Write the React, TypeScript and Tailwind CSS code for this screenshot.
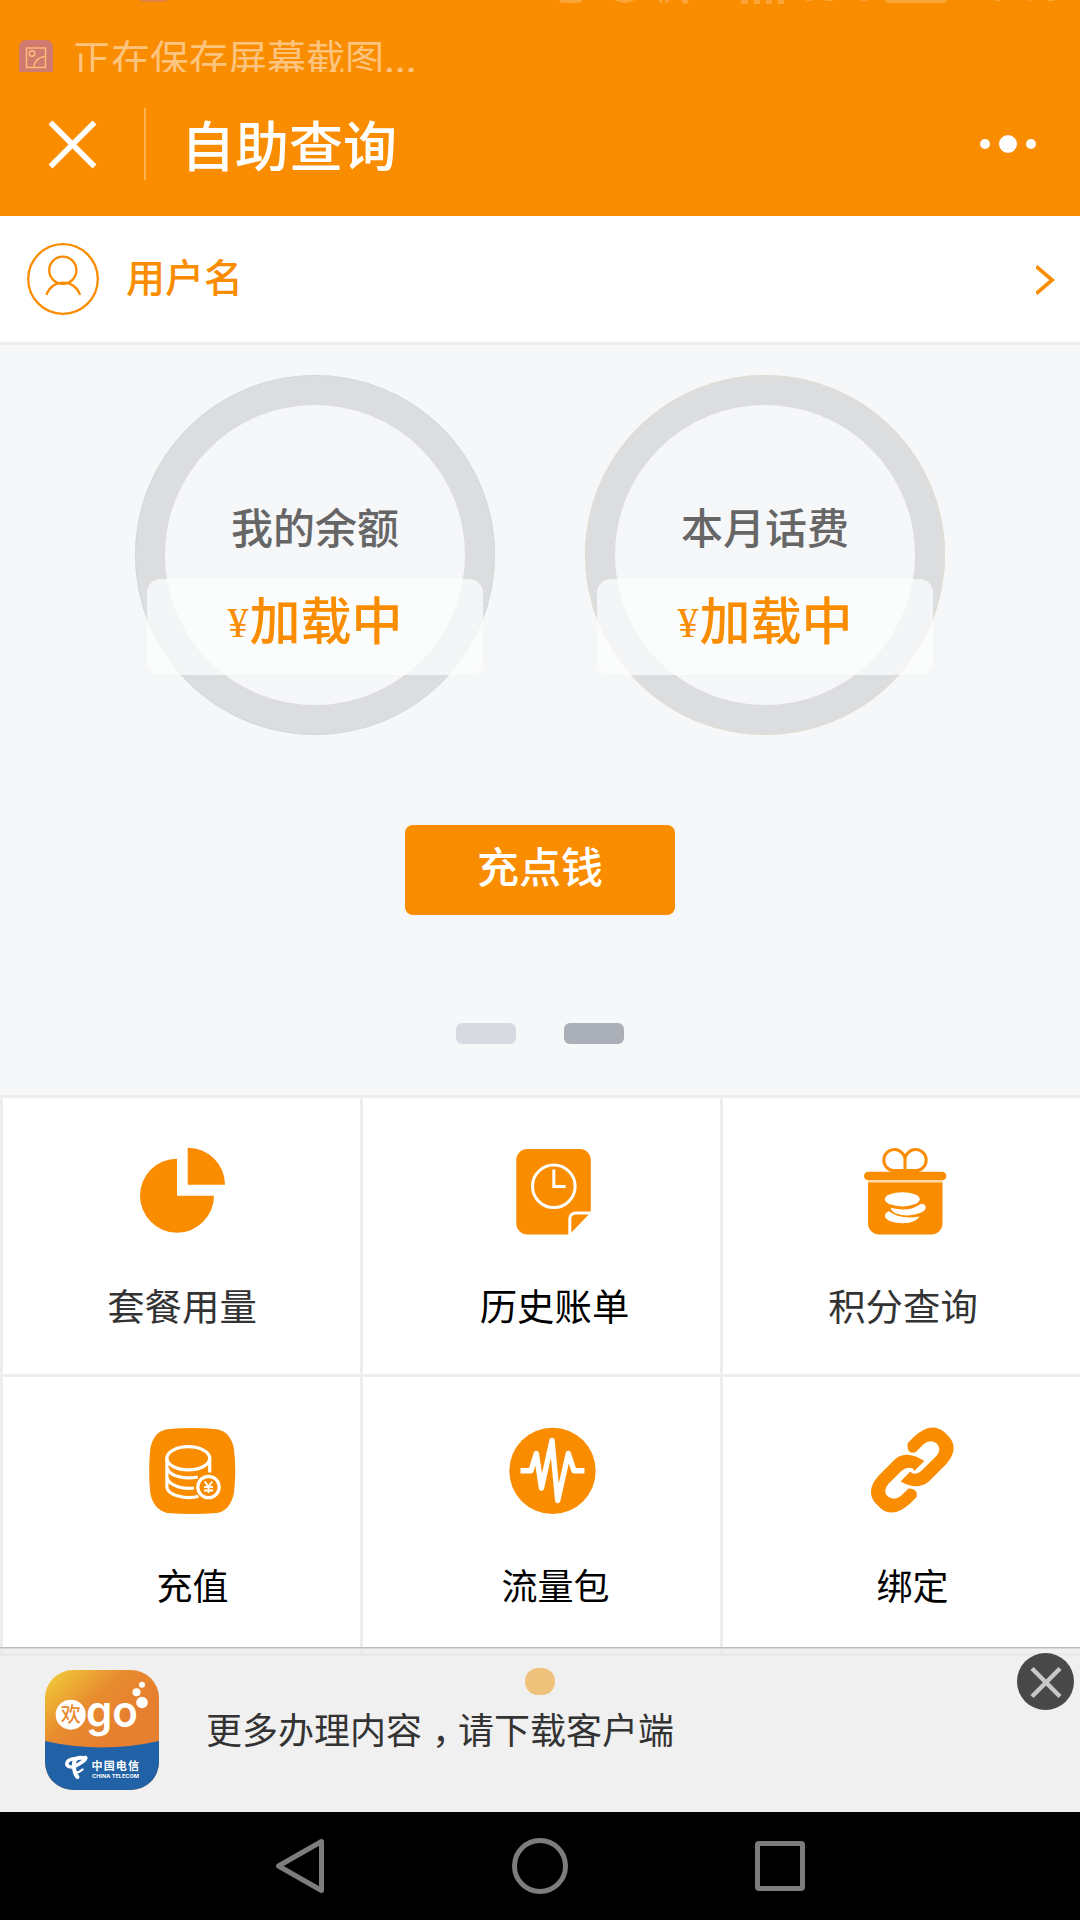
import type { ReactNode } from "react";

const PieIcon = () => (
  <svg className="w-[90px] h-[90px] overflow-visible" viewBox="0 0 90 90" fill="#fa8c00">
    <path d="M40 12.7A37 37 0 1 0 77 49.7H40Z" />
    <path d="M50.7 1.8V38.8H88A37 37 0 0 0 50.7 1.8Z" />
  </svg>
);

const BillIcon = () => (
  <svg className="w-[90px] h-[90px] overflow-visible" viewBox="0.7 0 90 90" fill="#fa8c00">
    <path d="M18 3H70.5a11 11 0 0 1 11 11V65.5H67q-8 0 -8 8V88.5H18a11 11 0 0 1 -11 -11V14a11 11 0 0 1 11 -11Z" />
    <path d="M79.5 68.5H67q-5 0 -5 5V86.5Z" />
    <circle cx="44.5" cy="40.3" r="21.3" fill="none" stroke="#fff" strokeWidth="3" />
    <path d="M44.5 23.5V40.5H56.3" fill="none" stroke="#fff" strokeWidth="3" />
  </svg>
);

const GiftIcon = () => (
  <svg className="w-[90px] h-[90px] overflow-visible" viewBox="0 0 90 90" fill="#fa8c00">
    <path
      d="M47 25V14a10.6 10.6 0 1 0 -12 10.6H59a10.6 10.6 0 1 0 -12 -10.6"
      fill="none"
      stroke="#fa8c00"
      strokeWidth="3"
    />
    <rect x="6" y="25.7" width="82.4" height="8.6" rx="4.3" />
    <path d="M10 36.3H84.5V77a11 11 0 0 1 -11 11.5H21a11 11 0 0 1 -11 -11.5Z" />
    <path d="M10 35.3H84.5" stroke="#fdd9a8" strokeWidth="2" />
    <ellipse cx="44.3" cy="53.3" rx="17.4" ry="7.1" fill="#fff" />
    <path d="M32.7 61.8Q50 66.5 61 59Q65.5 56 67.7 60.5Q68 65 62 67Q50 71.5 38 67.5Q33 65 32.7 61.8Z" fill="#fff" />
    <path d="M31 65.3Q26 67 27.2 71.5Q31 77 45 77.3Q58 77 61.5 70.5Q43 74 31 65.3Z" fill="#fff" />
  </svg>
);

const CoinsIcon = () => (
  <svg className="w-[90px] h-[90px] overflow-visible" viewBox="0 0 90 90">
    <path
      d="M19 4.2Q44 2 69 4.2Q83 7 86 24Q88.5 46 86 68Q82 86 69 88Q44 90 19 88Q5 84 2.3 68Q0 46 2.3 24Q5 7 19 4.2Z"
      fill="#fa8c00"
    />
    <g fill="none" stroke="#fff" strokeWidth="3.2">
      <ellipse cx="40.3" cy="33.3" rx="21.4" ry="11.6" />
      <path d="M18.9 33V62C19 70 38 75 50.500 71.300" />
      <path d="M61.7 33V47.5" />
      <path d="M18.9 43C22 52 38 54.5 49.8 52" />
      <path d="M18.9 53C22 61.5 36 64.5 46 63" />
      <circle cx="60.5" cy="62" r="10.7" />
    </g>
    <path d="M56.7 56.5L60.5 61.5L64.3 56.5M60.5 61.5V68M56 62H65M56 65.5H65" fill="none" stroke="#fff" strokeWidth="1.8" />
  </svg>
);

const PulseIcon = () => (
  <svg className="w-[90px] h-[90px] overflow-visible" viewBox="0 0 90 90">
    <circle cx="41.5" cy="45.9" r="43.2" fill="#fa8c00" />
    <path
      d="M9.5 45.7H20L25.3 28.5L30.5 63L41 15.5L46.7 75.5L57.3 28.5L63 45.7H73.5"
      fill="none"
      stroke="#fff"
      strokeWidth="5.4"
      strokeLinejoin="round"
    />
  </svg>
);

const LinkIcon = () => (
  <svg className="w-[90px] h-[90px] overflow-visible" viewBox="0.7 0 90 90">
    <g fill="#fa8c00">
      <path d="M40.5 18L47 11.5Q64 -4 77 7L82 12Q92 24 79 39L61.5 56.5Q50 66 33.3 56.5L43 46.5L44.5 48Q50 50.5 56 44L69 31Q75 24 69.5 18.5Q63 14 56.5 19L48.5 27Q44 29 41 25.5Q39.5 21 40.5 18Z" />
      <path d="M49.3 72L42.8 78.500Q26 94 13 83L8 78Q-2 66 11 51L28.5 33.5Q40 25 57 36L47 46L45.5 43.5Q40 41 34 46L21 59Q15 66 20.5 71.5Q27 76 33.5 71L41.3 63.5Q46 63 48.5 66Q50.3 69 49.3 72Z" />
    </g>
  </svg>
);

interface CellProps {
  label: string;
  icon: ReactNode;
  className?: string;
  textClass?: string;
}

const Cell = ({ label, icon, className = "", textClass = "" }: CellProps) => (
  <div className={`flex flex-col items-center bg-white pt-12 ${className}`}>
    {icon}
    <span className={`mt-11 leading-[50px] whitespace-nowrap ${textClass}`}>{label}</span>
  </div>
);

const Ring = ({ label, edge }: { label: string; edge: string }) => (
  <div className={`relative size-[360px] rounded-full border-[30px] border-[#dcdddf] outline-1 -outline-offset-1 ${edge}`}>
    <div className="pt-24 text-center text-[42px] font-medium leading-[50px] text-[#666]">{label}</div>
    <div className="absolute -left-[18px] top-[174px] flex h-24 w-[336px] items-start justify-center rounded-[14px] bg-[#feffff]/70 pt-[9px] text-[51px] leading-[60px] text-[#fa8c00]">
      <span className="mr-px font-['Liberation_Serif',serif] text-[42px] leading-[70px]">¥</span>
      <span className="font-medium">加载中</span>
    </div>
  </div>
);

const AppLogo = () => (
  <svg className="w-[114px] h-[120px]" viewBox="0 0 114 120">
    <defs>
      <linearGradient id="sun" x1="0" y1="0" x2="0.6" y2="0.7">
        <stop offset="0" stopColor="#f2d43c" />
        <stop offset="0.18" stopColor="#eeb836" />
        <stop offset="0.5" stopColor="#e88c2f" />
        <stop offset="0.85" stopColor="#e67f2f" />
      </linearGradient>
      <clipPath id="tile">
        <rect width="114" height="120" rx="28" />
      </clipPath>
    </defs>
    <g clipPath="url(#tile)">
      <rect width="114" height="120" fill="url(#sun)" />
      <path d="M0 71Q57 84 114 71V120H0Z" fill="#2161a5" />
    </g>
    <circle cx="25.7" cy="44.7" r="15" fill="#fff" />
    <text x="15.7" y="52" fontSize="20" fontWeight="500" fill="#e88a30" fontFamily="'Noto Sans CJK SC', sans-serif">
      欢
    </text>
    <text x="41" y="56.5" fontSize="44" fontWeight="600" fill="#fff" textLength="52" lengthAdjust="spacingAndGlyphs" fontFamily="Inter, sans-serif">
      go
    </text>
    <circle cx="97" cy="14.7" r="3" fill="#fff" />
    <circle cx="91.5" cy="22.3" r="4" fill="#fff" />
    <circle cx="97" cy="32.5" r="5.8" fill="#fff" />
    {/* telecom mark */}
    <g fill="none" stroke="#fff" strokeLinecap="round">
      <path d="M31 88.5Q21 89 22 95Q25 99.500 34 94Q42 89 40.500 87.500" strokeWidth="3.6" />
      <path d="M38 88Q28 86 29 97Q29.500 104 32.500 107" strokeWidth="4" />
      <path d="M30 102.5Q34 103 37.500 99.500" strokeWidth="2.4" />
    </g>
    <text x="46.5" y="100" fontSize="11" fontWeight="700" fill="#fff" textLength="47.500" fontFamily="'Noto Sans CJK SC', sans-serif">
      中国电信
    </text>
    <text x="47" y="108" fontSize="5" fontWeight="700" fill="#fff" textLength="47" lengthAdjust="spacingAndGlyphs" fontFamily="Inter, sans-serif">
      CHINA TELECOM
    </text>
  </svg>
);

const App = () => {
  return (
    <div className="flex h-[1920px] w-[1080px] flex-col overflow-hidden bg-white font-['Noto_Sans_CJK_SC',sans-serif]">
      <header className="h-[216px] shrink-0 bg-[#fa8c00]">
        {/* status bar sliding away under the screenshot notice */}
        <div className="h-[72px] overflow-hidden">
          <svg className="block h-[5px] w-[1080px]" viewBox="0 0 1080 5" fill="#fff" fillOpacity="0.22">
            <path d="M139 0H168Q166 2 162 2H145Q141 2 139 0Z" fill="#d17a70" fillOpacity="0.6" />
            <path d="M559 0H582Q581 3 578 3H563Q560 3 559 0ZM614 0H635Q625 6 614 0ZM659 0H662V3H659ZM665 0H670L667 3H665ZM681 0H689Q688 4 685 4Q682 4 681 0Z" />
            <path d="M741 0H748V4H741ZM754 0H760V4H754ZM766 0H772V4H766ZM778 0H784V4H778ZM885 0H947Q946 3 943 3H889Q886 3 885 0Z" />
            <path d="M806 0H812V1H806ZM824 0H834Q829 2.5 824 0ZM860 0H868Q864 2.5 860 0ZM995 0H1000V1H995ZM1028 0H1031V1H1028ZM1048 0H1054V1H1048Z" />
          </svg>
          <div className="flex items-start pl-[19px] pt-[35px]">
            <svg className="size-[34px]" viewBox="0 0 34 34">
              <rect width="34" height="36" rx="7" fill="#d17a70" />
              <g fill="none" stroke="#fdc078" strokeWidth="1.4">
                <rect x="7.5" y="8" width="19" height="19.5" />
                <circle cx="13" cy="13.5" r="2.8" />
                <path d="M26 16.5Q17 17 14.5 27" />
              </g>
            </svg>
            <span className="-mt-[3px] ml-[19px] text-[39px] leading-[39px] text-[#fdc47f]">正在保存屏幕截图...</span>
          </div>
        </div>
        <div className="flex h-36 items-center pl-12 pr-11 text-white">
          <svg className="size-[50px]" viewBox="0 0 50 50" fill="none" stroke="currentColor" strokeWidth="5.5">
            <path d="M2.5 3.5L46.5 47.5M46.5 3.5L2.5 47.5" />
          </svg>
          <div className="ml-[46px] h-[72px] w-0.5 bg-[#fcb04f]" />
          <h1 className="ml-[35px] text-[54px] font-medium leading-[60px]">自助查询</h1>
          <div className="ml-auto flex items-center gap-[9px]">
            <i className="size-2.5 rounded-full bg-white" />
            <i className="size-[18px] rounded-full bg-white" />
            <i className="size-2.5 rounded-full bg-white" />
          </div>
        </div>
      </header>

      <div className="flex h-[129px] shrink-0 items-center border-b-[3px] border-[#eee] pl-[27px] pr-6 text-[#fa8c00]">
        <svg className="size-[72px]" viewBox="0 0 72 72" fill="none" stroke="currentColor" strokeWidth="2.3">
          <circle cx="36" cy="36" r="34.8" />
          <circle cx="35.8" cy="27.3" r="13.6" />
          <path d="M19.5 52A17.5 17.5 0 0 1 53 52" />
        </svg>
        <span className="-mt-2 ml-[27px] text-[39px] font-medium leading-[46px]">用户名</span>
        <svg className="ml-auto mt-0.5 h-8 w-5" viewBox="0.8 0 20 32" fill="none" stroke="currentColor" strokeWidth="3.6">
          <path d="M1 2.500L17 16L1 29.500" />
        </svg>
      </div>

      <section className="flex h-[750px] shrink-0 flex-col items-center bg-[#f6f7f9] pt-[30px]">
        <div className="flex gap-[90px]">
          <Ring label="我的余额" edge="outline-[#d0dcda]" />
          <Ring label="本月话费" edge="outline-[#e4ddcf]" />
        </div>
        <button className="mt-[90px] h-[90px] w-[270px] rounded-lg bg-[#fa8c00] pb-2.5 text-[42px] font-medium leading-[50px] text-white">
          充点钱
        </button>
        <div className="mt-[108px] flex gap-12">
          <i className="h-[21px] w-[60px] rounded-md bg-[#d7dae0]" />
          <i className="h-[21px] w-[60px] rounded-md bg-[#abafb8]" />
        </div>
      </section>

      <section className="grid h-[561px] shrink-0 grid-cols-3 grid-rows-2 gap-[3px] bg-[#eee] py-[3px] pl-[3px]">
        <Cell label="套餐用量" icon={<PieIcon />} className="pl-px" textClass="text-[37.4px] text-[#333]" />
        <Cell label="历史账单" icon={<BillIcon />} className="pl-[26px]" textClass="text-[37.4px] text-black" />
        <Cell label="积分查询" icon={<GiftIcon />} className="pl-[3px]" textClass="text-[37.4px] text-[#333]" />
        <Cell label="充值" icon={<CoinsIcon />} className="pl-[22px]" textClass="text-[36px] text-black" />
        <Cell label="流量包" icon={<PulseIcon />} className="pl-7" textClass="text-[36px] text-black" />
        <Cell label="绑定" icon={<LinkIcon />} className="pl-[22px]" textClass="text-[36px] text-black" />
      </section>

      {/* download bar overlaps the last grid line */}
      <div className="relative z-10 -mt-[9px] flex h-[165px] shrink-0 items-start border-t border-[#bdbdbd] bg-[#e6e6e6]/60 pl-[45px] shadow-[inset_0_1px_0_#d8d8d8]">
        <div className="mt-[22px]">
          <AppLogo />
        </div>
        <p className="ml-[47px] mt-[55px] whitespace-nowrap text-[36px] leading-[50px] text-[#333]">
          更多办理内容<span className="pl-2.5 pr-2 [font-feature-settings:'halt']">，</span>请下载客户端
        </p>
        <i className="absolute left-[525px] top-5 h-[27px] w-[30px] rounded-[13px] bg-[#eec27a]" />
        <button className="absolute right-1.5 top-[5px] size-[57px] rounded-full bg-[#484848]">
          <svg className="size-[57px]" viewBox="0 0 57 57" fill="none" stroke="#c8c8c8" strokeWidth="4.5">
            <path d="M15 15.5L43 43.5M43 15.5L15 43.5" />
          </svg>
        </button>
      </div>

      <nav className="flex h-[108px] shrink-0 items-center gap-[188px] bg-black pl-[274px]">
        <svg className="h-14 w-[50px]" viewBox="0 0 50 56" fill="none" stroke="#7d7d7d" strokeWidth="5" strokeLinejoin="round">
          <path d="M4.5 28L47.5 3.5V52.5Z" />
        </svg>
        <div className="size-14 rounded-full border-[5px] border-[#7d7d7d]" />
        <div className="-ml-px size-[50px] rounded-[4px] border-[5px] border-[#7d7d7d]" />
      </nav>
    </div>
  );
};

export default App;
